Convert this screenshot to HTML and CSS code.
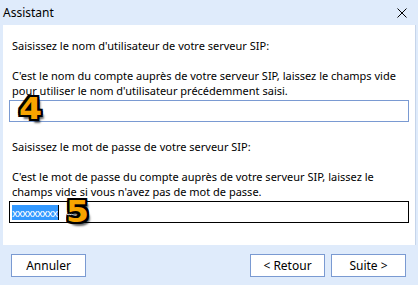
FILE: index.html
```html
<!DOCTYPE html>
<html lang="fr">

<head>
    <meta charset="UTF-8">
    <title>Assistant</title>
    <link rel="stylesheet" href="styles.css">
</head>

<body>
    <div id="window">
        <div class="titlebar">
            <span class="title">Assistant</span>
            <span class="close">
                <svg width="10" height="10" viewBox="0 0 10 10">
                    <path d="M0.5 0.5L9.5 9.5M9.5 0.5L0.5 9.5" stroke="#000" stroke-width="1" fill="none" />
                </svg>
            </span>
        </div>

        <div class="content">
            <div class="section">
                <p class="label">Saisissez le nom d'utilisateur de votre serveur SIP:</p>
                <p class="help">C'est le nom du compte auprès de votre serveur SIP, laissez le champs vide pour utiliser le nom d'utilisateur précédemment saisi.</p>
                <div class="field">
                    <span class="mark mark-4">4</span>
                </div>
            </div>

            <div class="section">
                <p class="label">Saisissez le mot de passe de votre serveur SIP:</p>
                <p class="help">C'est le mot de passe du compte auprès de votre serveur SIP, laissez le champs vide si vous n'avez pas de mot de passe.</p>
                <div class="field focus">
                    <span class="selected">xxxxxxxxx</span><span class="caret"></span>
                    <span class="mark mark-5">5</span>
                </div>
            </div>
        </div>

        <div class="footer">
            <button class="btn">Annuler</button>
            <div class="nav">
                <button class="btn">&lt; Retour</button>
                <button class="btn">Suite &gt;</button>
            </div>
        </div>
    </div>
</body>

</html>
```

FILE: styles.css
```css
body {
    margin: 0;
    font-family: "Noto Sans", "DejaVu Sans", sans-serif;
    font-size: 11px;
    color: #000;
}

#window {
    width: 418px;
    height: 285px;
    background-color: #dfebfb;
    display: flex;
    flex-direction: column;
}

.titlebar {
    height: 25px;
    display: flex;
    align-items: center;
    justify-content: space-between;
    padding: 0 11px 0 3px;
    font-size: 12px;
}

.close {
    display: flex;
}

.content {
    height: 220px;
    margin: 0 2px 0 3px;
    border-right: 1px solid #c6d5ea;
    background-color: #fff;
    padding-top: 13px;
    box-sizing: border-box;
}

.section {
    margin-bottom: 17px;
}

.label,
.help {
    margin: 0 9px;
    line-height: 15px;
}

.label {
    margin-bottom: 15px;
}

.field {
    position: relative;
    height: 22px;
    margin: 2px 6px 0 6px;
    border: 1px solid #7a9ad2;
    box-sizing: border-box;
    display: flex;
    align-items: center;
    padding-left: 2px;
}

.field.focus {
    border-color: #000;
}

.selected {
    background-color: #3399ff;
    color: #fff;
    line-height: 15px;
    letter-spacing: -0.8px;
    padding-right: 1px;
}

.caret {
    width: 1px;
    height: 15px;
    background-color: #000;
}

/* chiffres d'annotation posés par-dessus la boîte de dialogue */
.mark {
    position: absolute;
    font-family: "DejaVu Sans", sans-serif;
    font-weight: 700;
    font-size: 30px;
    line-height: 20px;
    color: #f8a400;
    transform: scaleX(1.1);
    transform-origin: left top;
    text-shadow:
        -2px -2px 0 #000, 2px -2px 0 #000, -2px 2px 0 #000, 2px 2px 0 #000,
        0 -2px 0 #000, 0 2px 0 #000, -2px 0 0 #000, 2px 0 0 #000,
        3px 4px 2px rgba(0, 0, 0, 0.6);
}

.mark-4 {
    left: 9px;
    top: -2px;
}

.mark-5 {
    left: 56px;
    top: 0;
}

.footer {
    flex: 1;
    display: flex;
    justify-content: space-between;
    align-items: flex-start;
    padding: 9px 12px 0 11px;
}

.nav {
    display: flex;
    gap: 6px;
}

.btn {
    width: 75px;
    height: 23px;
    background-color: #fff;
    border: 1px solid #7a9ad2;
    font-family: inherit;
    font-size: 12px;
    color: #000;
    padding: 0;
}
```
